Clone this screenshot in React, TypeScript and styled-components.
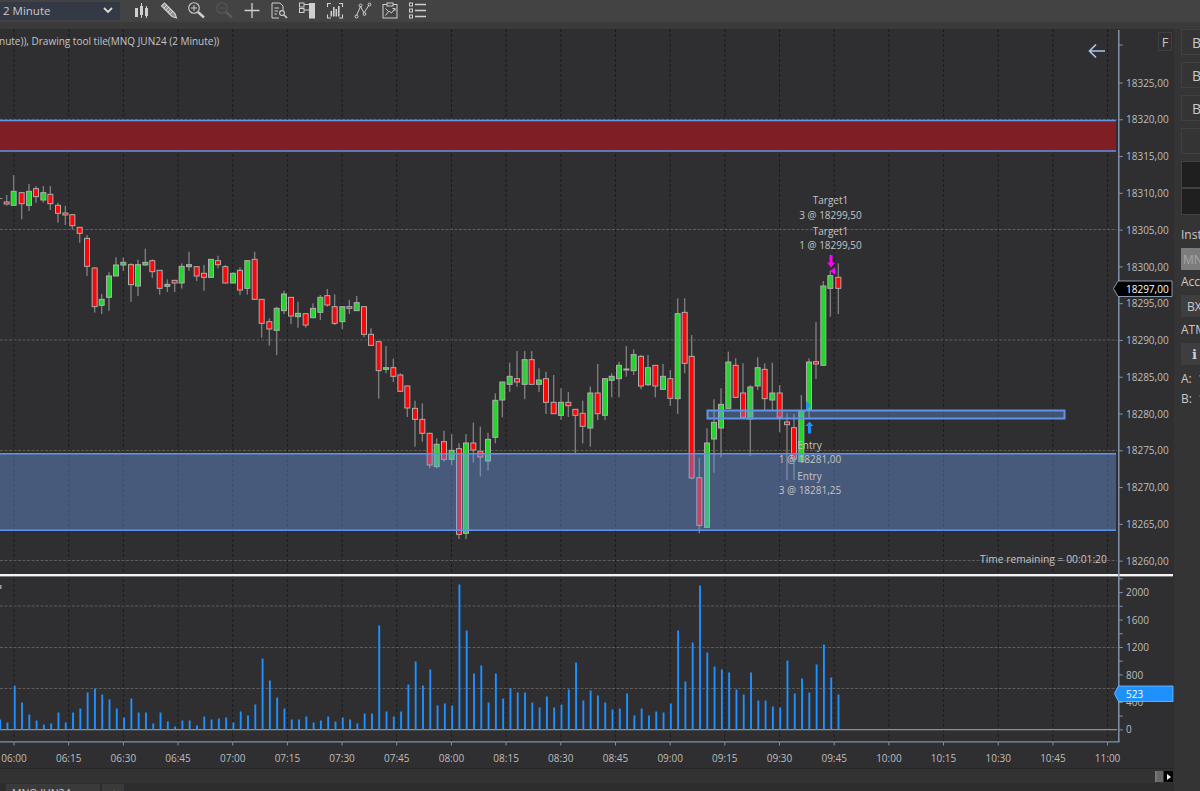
import { FC } from "react";
import styled, { createGlobalStyle } from "styled-components";

type Candle = [number, number, number, number, number, "r" | "g"];
type Group = { ox: number; oy: number; rows: Candle[] };

const RED = "#ff0606";
const GREEN = "#24d62c";
const BLUE = "#1e90ff";
const ZONE_LINE = "#6193ea";

// candle coordinates as read off the chart at 3x, grouped by the crop they came from
const candleGroups: Group[] = [
  {
    ox: 0,
    oy: 170,
    rows: [
      [20, 75, 107, 96, 102, "r"], [41, 15, 107, 64, 106, "g"], [65, 68, 148, 68, 101, "r"],
      [87, 42, 123, 64, 106, "g"], [108, 48, 98, 56, 80, "r"], [130, 48, 98, 68, 90, "g"],
      [151, 48, 120, 73, 101, "r"], [174, 98, 158, 106, 130, "r"], [196, 108, 165, 129, 135, "r"],
      [217, 133, 178, 134, 167, "r"], [239, 172, 218, 172, 190, "r"], [261, 195, 318, 205, 289, "r"],
      [284, 292, 428, 294, 410, "r"], [305, 372, 432, 388, 406, "g"], [327, 307, 422, 318, 382, "g"],
      [348, 262, 318, 285, 318, "g"], [370, 262, 303, 277, 285, "g"], [393, 280, 395, 284, 344, "r"],
      [414, 269, 378, 284, 348, "g"], [436, 236, 287, 277, 285, "g"], [457, 268, 324, 272, 305, "r"],
      [479, 300, 374, 301, 355, "r"], [502, 328, 366, 343, 349, "g"], [524, 330, 366, 331, 339, "r"],
      [545, 280, 356, 289, 339, "g"], [567, 245, 302, 284, 290, "g"], [590, 288, 333, 290, 318, "r"],
      [612, 285, 362, 310, 322, "r"], [633, 267, 323, 268, 322, "g"], [654, 257, 295, 272, 284, "r"],
      [676, 285, 340, 290, 339, "r"], [699, 307, 340, 310, 339, "g"], [720, 292, 375, 301, 360, "r"],
      [742, 270, 374, 272, 355, "g"], [764, 245, 388, 268, 388, "r"], [785, 388, 503, 388, 460, "r"],
      [808, 445, 527, 455, 477, "r"], [830, 410, 555, 415, 481, "g"],
    ],
  },
  {
    ox: 260,
    oy: 280,
    rows: [
      [72, 32, 102, 42, 92, "g"], [93, 52, 132, 52, 108, "r"], [114, 65, 143, 100, 110, "g"],
      [137, 100, 143, 101, 135, "r"], [159, 70, 115, 85, 113, "g"], [181, 45, 120, 52, 97, "g"],
      [202, 27, 80, 47, 75, "r"], [224, 43, 135, 80, 130, "r"], [247, 80, 148, 80, 125, "g"],
      [268, 60, 102, 80, 85, "r"], [290, 48, 93, 68, 92, "g"], [312, 80, 172, 80, 163, "r"],
      [333, 145, 197, 163, 196, "r"], [356, 185, 356, 185, 272, "r"], [378, 198, 280, 263, 268, "g"],
      [400, 236, 306, 263, 289, "r"], [421, 280, 335, 285, 334, "r"], [442, 317, 411, 318, 384, "r"],
      [465, 362, 500, 385, 418, "r"], [487, 370, 485, 418, 460, "r"], [509, 458, 565, 460, 555, "r"],
      [530, 475, 565, 493, 560, "g"], [552, 452, 545, 485, 538, "r"], [575, 462, 556, 511, 538, "g"],
      [597, 490, 777, 506, 763, "r"], [618, 462, 777, 489, 760, "g"], [640, 428, 548, 489, 510, "r"],
      [661, 440, 590, 515, 531, "r"], [684, 458, 572, 478, 543, "g"], [706, 340, 490, 361, 472, "g"],
      [727, 306, 412, 306, 360, "g"], [749, 248, 335, 289, 313, "g"],
    ],
  },
  {
    ox: 490,
    oy: 290,
    rows: [
      [81, 183, 290, 266, 276, "r"], [104, 183, 327, 209, 283, "g"], [125, 183, 283, 209, 283, "r"],
      [147, 235, 306, 270, 283, "g"], [168, 245, 372, 266, 337, "r"], [191, 255, 372, 337, 371, "r"],
      [213, 295, 390, 337, 376, "g"], [235, 306, 381, 337, 347, "r"], [256, 357, 490, 358, 376, "r"],
      [278, 332, 460, 370, 409, "r"], [301, 290, 470, 309, 414, "g"], [323, 222, 390, 309, 371, "r"],
      [345, 265, 390, 266, 376, "g"], [365, 250, 322, 259, 271, "g"], [387, 215, 322, 226, 266, "g"],
      [409, 168, 260, 237, 239, "g"], [431, 178, 255, 194, 242, "g"], [453, 195, 298, 199, 288, "r"],
      [474, 195, 288, 233, 284, "g"], [496, 225, 322, 226, 288, "r"], [519, 222, 300, 259, 298, "g"],
      [541, 240, 348, 266, 325, "r"], [563, 25, 372, 71, 326, "g"], [584, 25, 250, 67, 220, "r"],
      [605, 135, 568, 199, 564, "r"], [628, 503, 730, 563, 706, "r"], [651, 415, 712, 459, 712, "g"],
      [672, 328, 548, 397, 447, "g"],
    ],
  },
  {
    ox: 670,
    oy: 340,
    rows: [
      [153, 145, 352, 193, 264, "g"], [175, 35, 205, 66, 205, "g"], [197, 55, 175, 76, 172, "r"],
      [219, 70, 235, 159, 232, "r"], [241, 135, 348, 141, 237, "g"], [263, 52, 150, 83, 138, "g"],
      [284, 70, 210, 88, 176, "r"], [307, 68, 210, 159, 180, "g"], [329, 135, 277, 159, 232, "r"],
      [351, 220, 420, 246, 254, "r"], [372, 222, 420, 263, 357, "r"], [394, 165, 365, 213, 365, "g"],
      [417, 55, 235, 66, 208, "g"],
    ],
  },
  {
    ox: 670,
    oy: 180,
    rows: [
      [438, 427, 597, 545, 552, "r"], [460, 303, 556, 318, 556, "g"],
      [481, 272, 410, 287, 325, "g"], [505, 250, 402, 292, 325, "r"],
    ],
  },
];

const volumes = [
  10, 7, 44, 27, 15, 9, 5, 6, 17, 7, 17, 21, 37, 41, 35, 30, 21, 12, 31, 17, 17, 6, 17, 8, 3, 9, 9, 4, 13, 10,
  11, 12, 7, 18, 14, 25, 71, 49, 32, 21, 10, 10, 13, 7, 9, 13, 8, 12, 10, 6, 16, 16, 104, 18, 13, 18, 45, 68,
  44, 60, 24, 26, 24, 145, 99, 56, 64, 27, 56, 31, 41, 37, 37, 27, 22, 33, 22, 25, 40, 67, 29, 39, 34, 27, 20,
  21, 36, 14, 21, 14, 18, 17, 26, 99, 48, 87, 144, 77, 63, 60, 57, 40, 35, 57, 29, 29, 23, 22, 69, 36, 51, 37,
  65, 85, 52, 35,
];

const times = [
  "06:00", "06:15", "06:30", "06:45", "07:00", "07:15", "07:30", "07:45", "08:00", "08:15", "08:30",
  "08:45", "09:00", "09:15", "09:30", "09:45", "10:00", "10:15", "10:30", "10:45", "11:00",
];

const prices = [
  "18325,00", "18320,00", "18315,00", "18310,00", "18305,00", "18300,00", "18295,00",
  "18290,00", "18285,00", "18280,00", "18275,00", "18270,00", "18265,00", "18260,00",
];

const timeX = (i: number) => 14 + i * 54.68;
const priceY = (i: number) => 83 + i * 36.78;
const volY = (v: number) => 729.8 - (v / 200) * 13.72;

const GlobalStyle = createGlobalStyle`
  html, body {
    margin: 0;
    padding: 0;
    background: #343434;
  }
  * {
    box-sizing: border-box;
  }
`;

const Page = styled.div`
  width: 1200px;
  height: 791px;
  overflow: hidden;
  display: flex;
  flex-direction: column;
  background: #343434;
  font-family: "Open Sans", "Noto Sans", sans-serif;
  color: #c4c4c4;
`;

const Toolbar = styled.div`
  height: 22px;
  flex: none;
  display: flex;
  align-items: stretch;
  background: #434343;
`;

const IntervalSelect = styled.div`
  width: 120px;
  margin: 2px 0;
  padding: 0 7px 1px 3px;
  display: flex;
  align-items: center;
  justify-content: space-between;
  background: #343a45;
  font-size: 11.5px;
  color: #c8c8c8;
`;

const ToolRow = styled.div`
  margin-left: 11px;
  display: flex;
  gap: 7.7px;
`;

const ToolIcon = styled.svg<{ $dim?: boolean }>`
  width: 20px;
  height: 22px;
  flex: none;
  color: ${(p) => (p.$dim ? "#5a5a5a" : "#cfcfcf")};
`;

const Strip = styled.div`
  height: 7px;
  flex: none;
  background: #3a3a3a;
`;

const Body = styled.div`
  flex: 1;
  min-height: 0;
  display: flex;
`;

const ChartColumn = styled.div`
  width: 1174px;
  flex: none;
  display: flex;
  flex-direction: column;
`;

const ChartPane = styled.div`
  position: relative;
  height: 739px;
  flex: none;
  background: #2f2f31;
  svg {
    display: block;
  }
`;

const ChartTitle = styled.div`
  position: absolute;
  left: -1px;
  top: 5px;
  font-size: 10px;
  line-height: 14px;
  color: #c4c4c4;
  white-space: nowrap;
`;

const ScaleButton = styled.div`
  position: absolute;
  left: 1158px;
  top: 3px;
  width: 14px;
  height: 19px;
  display: flex;
  align-items: center;
  justify-content: center;
  border: 1px solid #3f3f3f;
  font-size: 13px;
  color: #c4c4c4;
`;

const AxisText = styled.text`
  font-family: "Open Sans", "Noto Sans", sans-serif;
  font-size: 10px;
  fill: #bdbdbd;
`;

const RemainingText = styled.text`
  font-family: "Open Sans", "Noto Sans", sans-serif;
  font-size: 10.3px;
  fill: #c4c4c4;
`;

const MarkerText = styled.text`
  font-family: "Open Sans", "Noto Sans", sans-serif;
  font-size: 10px;
  fill: #c4c4c4;
  text-anchor: middle;
`;

const BadgeText = styled.text`
  font-family: "Open Sans", "Noto Sans", sans-serif;
  font-size: 10px;
  fill: #ffffff;
`;

const ScrollRow = styled.div`
  height: 15px;
  flex: none;
  display: flex;
  justify-content: flex-end;
  align-items: stretch;
  padding: 2px 1px 1px 0;
  border-top: 1px solid #262626;
  background: #333333;
`;

const ScrollThumb = styled.div`
  width: 8px;
  background: #666666;
  border-left: 2px solid #777777;
`;

const ScrollEnd = styled.div`
  width: 9px;
  margin-left: 1px;
  background: #000000;
  display: flex;
  align-items: center;
  justify-content: center;
  &::after {
    content: "";
    border-left: 4px solid #ffffff;
    border-top: 3px solid transparent;
    border-bottom: 3px solid transparent;
  }
`;

const TabRow = styled.div`
  flex: 1;
  display: flex;
  gap: 2px;
  padding-left: 6px;
  background: #2d2d2d;
`;

const Tab = styled.div<{ $wide?: boolean }>`
  width: ${(p) => (p.$wide ? "94px" : "22px")};
  padding: 3px 0 0 ${(p) => (p.$wide ? "6px" : "9px")};
  margin-top: 1px;
  background: #3a3a3a;
  font-size: 10.5px;
  line-height: 13px;
  color: #d0d0d0;
  white-space: nowrap;
  overflow: hidden;
`;

const Side = styled.div`
  width: 19px;
  margin-left: 7px;
  flex: none;
  overflow: hidden;
  display: flex;
  flex-direction: column;
`;

const SideButton = styled.div`
  width: 60px;
  height: 26px;
  margin-bottom: 7px;
  padding-left: 10px;
  display: flex;
  align-items: center;
  border: 1px solid #414141;
  font-size: 14px;
  color: #c8c8c8;
`;

const DarkCell = styled.div`
  width: 60px;
  height: 27px;
  background: #1f1f1f;
  border: 1px solid #414141;
`;

const SideLabel = styled.div<{ $top: number }>`
  margin-top: ${(p) => p.$top}px;
  width: 60px;
  font-size: 12px;
  line-height: 16px;
  color: #c8c8c8;
  white-space: nowrap;
`;

const SideField = styled.div<{ $muted?: boolean }>`
  width: 60px;
  height: 22px;
  margin-top: 5px;
  padding-left: ${(p) => (p.$muted ? "2px" : "6px")};
  display: flex;
  align-items: center;
  background: ${(p) => (p.$muted ? "#7c7c7c" : "#3e3e41")};
  font-size: 12px;
  color: ${(p) => (p.$muted ? "#a6a6a6" : "#c8c8c8")};
`;

const InfoGlyph = styled.span`
  padding-left: 5px;
  font-family: "DejaVu Serif", serif;
  font-weight: 700;
  font-size: 13px;
  color: #d0d0d0;
`;

const Chevron: FC = () => (
  <svg width="10" height="7" viewBox="0 0 10 7">
    <path d="M1 1 L5 5 L9 1" fill="none" stroke="#d8d8d8" strokeWidth="1.8" />
  </svg>
);

const ToolIcons: FC = () => (
  <ToolRow>
    {/* candles */}
    <ToolIcon viewBox="0 0 20 22">
      <g fill="currentColor">
        <rect x="4" y="8" width="3" height="9" />
        <rect x="9" y="6" width="3" height="9" />
        <rect x="10" y="3" width="1" height="15" />
        <rect x="14" y="8" width="3" height="8" />
        <rect x="15" y="6" width="1" height="12" />
      </g>
    </ToolIcon>
    {/* pencil */}
    <ToolIcon viewBox="0 0 20 22">
      <g fill="none" stroke="currentColor">
        <path d="M2.5 6 L5.5 3 L16 13.5 L17.5 18 L13 16.5 Z" fill="#8e8e8e" strokeWidth="1.1" />
        <path d="M5 8 L8 5 M7 10 L10 7 M9 12 L12 9 M11 14 L14 11" strokeWidth="0.8" stroke="#e2e2e2" />
      </g>
    </ToolIcon>
    {/* zoom in */}
    <ToolIcon viewBox="0 0 20 22">
      <g fill="none" stroke="currentColor">
        <circle cx="8" cy="8" r="5.3" strokeWidth="1.1" />
        <path d="M5 8 H11 M8 5 V11" strokeWidth="1" />
        <path d="M12 12 L18 17.5" strokeWidth="2.4" />
      </g>
    </ToolIcon>
    {/* zoom out */}
    <ToolIcon $dim viewBox="0 0 20 22">
      <g fill="none" stroke="currentColor">
        <circle cx="8" cy="8" r="5.3" strokeWidth="1.1" />
        <path d="M5 8 H11" strokeWidth="1" />
        <path d="M12 12 L18 17.5" strokeWidth="2.4" />
      </g>
    </ToolIcon>
    {/* crosshair */}
    <ToolIcon viewBox="0 0 20 22">
      <path d="M2.5 10.5 H17.5 M10 3 V18" fill="none" stroke="currentColor" strokeWidth="1.3" />
    </ToolIcon>
    {/* document with magnifier */}
    <ToolIcon viewBox="0 0 20 22">
      <g fill="none" stroke="currentColor">
        <path d="M14 10 V6 L11 3 H3 V18 H10" strokeWidth="1" />
        <path d="M5.5 8 H10 M5.5 11 H9 M5.5 14 H8" strokeWidth="1" />
        <circle cx="13" cy="13" r="2.4" strokeWidth="1.1" />
        <path d="M15 15 L18 18" strokeWidth="1.6" />
      </g>
    </ToolIcon>
    {/* panel layout */}
    <ToolIcon viewBox="0 0 20 22">
      <g fill="none" stroke="currentColor">
        <rect x="2.5" y="3" width="4.5" height="4" strokeWidth="1" />
        <rect x="2.5" y="8.5" width="4.5" height="4" strokeWidth="1" />
        <path d="M7 4.5 H12 M7 10 H12" strokeWidth="1" />
      </g>
      <rect x="12" y="3" width="6" height="15.5" fill="currentColor" />
    </ToolIcon>
    {/* framed bars */}
    <ToolIcon viewBox="0 0 20 22">
      <g fill="none" stroke="currentColor" strokeWidth="1.1">
        <path d="M6 3.5 H2.5 V7 M14 3.5 H17.5 V7 M2.5 14.5 V18 H6 M17.5 14.5 V18 H14" />
      </g>
      <g fill="currentColor">
        <rect x="5.5" y="11" width="1.6" height="5.5" />
        <rect x="8" y="7" width="1.6" height="9.5" />
        <rect x="10.5" y="9" width="1.6" height="7.5" />
        <rect x="13" y="6" width="1.6" height="10.5" />
      </g>
    </ToolIcon>
    {/* polyline */}
    <ToolIcon viewBox="0 0 20 22">
      <g fill="none" stroke="currentColor" strokeWidth="1">
        <path d="M3.5 15.5 L7.5 6.5 L11 13 L16 5" />
        <circle cx="3.5" cy="16.5" r="1.5" />
        <circle cx="7.5" cy="5.5" r="1.4" />
        <circle cx="11.5" cy="14" r="1.4" />
        <circle cx="16.5" cy="4.5" r="1.4" />
      </g>
    </ToolIcon>
    {/* clipboard chart */}
    <ToolIcon viewBox="0 0 20 22">
      <g fill="none" stroke="currentColor" strokeWidth="1">
        <rect x="3" y="4.5" width="14" height="13.5" />
        <rect x="7" y="3" width="6" height="3" fill="#434343" />
        <path d="M5.5 15.5 L9 11 L11.5 13 L15 8.5 M12.5 8.5 H15 V11 M5.5 8.5 L8 11" />
      </g>
    </ToolIcon>
    {/* list */}
    <ToolIcon viewBox="0 0 20 22">
      <g fill="none" stroke="currentColor" strokeWidth="1">
        <rect x="1.5" y="3" width="3" height="3" />
        <rect x="1.5" y="9" width="3" height="3" />
        <rect x="1.5" y="15" width="3" height="3" />
      </g>
      <path d="M7 4.5 H18 M7 10.5 H18 M7 16.5 H18" stroke="currentColor" strokeWidth="1.4" />
    </ToolIcon>
  </ToolRow>
);

const Candles: FC = () => (
  <g>
    {/* lone tick at the left edge */}
    <path d="M0 198.5 H2.5" stroke="#8a8a8a" strokeWidth="1" />
    {candleGroups.map((g) =>
      g.rows.map(([zx, wt, wb, bt, bb, kind]) => {
        const x = g.ox + zx / 3;
        const top = g.oy + Math.min(bt, bb) / 3;
        const h = Math.max(Math.abs(bb - bt) / 3, 1);
        return (
          <g key={`${g.ox}-${zx}`}>
            <line x1={x} x2={x} y1={g.oy + wt / 3} y2={g.oy + wb / 3} stroke="#7c7c7c" strokeWidth="1.4" />
            <rect
              x={x - 2.5}
              y={top}
              width={5}
              height={h}
              fill={kind === "r" ? RED : GREEN}
              stroke="#adadad"
              strokeWidth="1"
            />
          </g>
        );
      })
    )}
  </g>
);

const Chart: FC = () => (
  <svg width="1174" height="739" viewBox="0 29 1174 739">
    {/* time grid */}
    {times.map((t, i) => (
      <line key={t} x1={timeX(i)} x2={timeX(i)} y1={29} y2={741} stroke="#1c1c1c" strokeDasharray="3 2" />
    ))}

    {/* price grid */}
    {[119.5, 229.5, 340, 450.5, 560.5, 606, 647.5, 688.5].map((y) => (
      <line key={y} x1={0} x2={1117} y1={y} y2={y} stroke="#5c5c5c" strokeDasharray="3 1.5" />
    ))}

    <Candles />

    {/* supply zone */}
    <rect x={0} y={120.5} width={1116} height={30.5} fill="#7f1f23" />
    <path d="M0 120.5 H1116 M0 151 H1116" stroke={ZONE_LINE} strokeWidth="1.5" />

    {/* demand zone, candles show through it */}
    <rect x={0} y={453.7} width={1116} height={76.6} fill="rgba(107,155,237,0.4)" />
    <path d="M0 453.7 H1116 M0 530.3 H1116" stroke={ZONE_LINE} strokeWidth="1.5" />
    <rect x={707.5} y={410.5} width={357} height={8} fill="rgba(107,155,237,0.35)" stroke={ZONE_LINE} strokeWidth="2" />

    {/* fills */}
    <path d="M829.5 255 H832.5 V262.5 H835 L831 267.5 L827 262.5 H829.5 Z" fill="#ff00ff" />
    <path d="M835 267 V275 L830.5 271 Z" fill="#ff00ff" />
    <path d="M808 433.5 H811 V426 H813.5 L809.5 421.5 L805.5 426 H808 Z" fill={BLUE} />
    <path d="M806 401 V410 L811 405.5 Z" fill={BLUE} />

    <MarkerText x={830.5} y={204}>Target1</MarkerText>
    <MarkerText x={830.5} y={219}>3 @ 18299,50</MarkerText>
    <MarkerText x={830.5} y={235}>Target1</MarkerText>
    <MarkerText x={830.5} y={249}>1 @ 18299,50</MarkerText>
    <MarkerText x={809.5} y={449}>Entry</MarkerText>
    <MarkerText x={810} y={463}>1 @ 18281,00</MarkerText>
    <MarkerText x={809.5} y={480}>Entry</MarkerText>
    <MarkerText x={810} y={494}>3 @ 18281,25</MarkerText>
    <RemainingText x={980} y={563}>Time remaining = 00:01:20</RemainingText>

    {/* back arrow */}
    <path d="M1105 51 H1089.5 M1096 44.5 L1089.5 51 L1096 57.5" fill="none" stroke="#a9c5e8" strokeWidth="1.7" />

    {/* pane divider */}
    <rect x={0} y={574} width={1173} height={2.4} fill="#f4f4f4" />
    <rect x={0} y={585} width={1.5} height={4} fill="#9a9a9a" />

    {/* volume */}
    <line x1={0} x2={1117} y1={729.6} y2={729.6} stroke="#8e8e8e" strokeWidth="1.2" />
    {volumes.map((v, i) => (
      <rect key={i} x={-0.8 + i * 7.29} y={729.5 - v} width={1.9} height={v} fill={BLUE} />
    ))}

    {/* price scale */}
    <line x1={1118.8} x2={1118.8} y1={30} y2={742} stroke="#7f93ad" strokeWidth="1.5" />
    <line x1={1118.8} x2={1122.8} y1={45} y2={45} stroke="#7f93ad" />
    {prices.map((p, i) => (
      <g key={p}>
        <line x1={1118.8} x2={1122.8} y1={priceY(i)} y2={priceY(i)} stroke="#7f93ad" />
        <AxisText x={1126} y={priceY(i) + 3.6}>{p}</AxisText>
      </g>
    ))}

    {/* volume scale */}
    {[2200, 2000, 1800, 1600, 1400, 1200, 1000, 800, 600, 400, 200, 0].map((v) => (
      <g key={v}>
        <line x1={1118.8} x2={1122.8} y1={volY(v)} y2={volY(v)} stroke="#7f93ad" />
        {v % 400 === 0 && v <= 2000 && (
          <AxisText x={1126} y={volY(v) + 3.6}>{v}</AxisText>
        )}
      </g>
    ))}

    {/* time scale */}
    <line x1={0} x2={1119.5} y1={741.8} y2={741.8} stroke="#7f93ad" strokeWidth="1.3" />
    {times.map((t, i) => (
      <g key={t}>
        <line x1={timeX(i)} x2={timeX(i)} y1={742} y2={745.5} stroke="#7f93ad" />
        <AxisText x={timeX(i)} y={762} textAnchor="middle">{t}</AxisText>
      </g>
    ))}

    {/* last price */}
    <path d="M1113.5 288.5 L1118 281 H1172 V296.5 H1118 Z" fill="#000000" stroke="#a8bdd6" strokeWidth="0.8" />
    <BadgeText x={1126} y={292.5}>18297,00</BadgeText>

    {/* last volume */}
    <path d="M1114.3 693.5 L1118.5 686 H1173 V701.5 H1118.5 Z" fill={BLUE} stroke="#7fbfff" strokeWidth="0.8" />
    <BadgeText x={1126} y={698}>523</BadgeText>
  </svg>
);

const App: FC = () => (
  <Page>
    <GlobalStyle />
    <Toolbar>
      <IntervalSelect>
        2 Minute
        <Chevron />
      </IntervalSelect>
      <ToolIcons />
    </Toolbar>
    <Strip />
    <Body>
      <ChartColumn>
        <ChartPane>
          <Chart />
          <ChartTitle>nute)), Drawing tool tile(MNQ JUN24 (2 Minute))</ChartTitle>
          <ScaleButton>F</ScaleButton>
        </ChartPane>
        <ScrollRow>
          <ScrollThumb />
          <ScrollEnd />
        </ScrollRow>
        <TabRow>
          <Tab $wide>MNQ JUN24</Tab>
          <Tab>+</Tab>
        </TabRow>
      </ChartColumn>
      <Side>
        <SideButton>B</SideButton>
        <SideButton>B</SideButton>
        <SideButton>B</SideButton>
        <SideButton />
        <DarkCell />
        <DarkCell />
        <SideLabel $top={12}>Instrument</SideLabel>
        <SideField $muted>MNQ</SideField>
        <SideLabel $top={4}>Account</SideLabel>
        <SideField>BX</SideField>
        <SideLabel $top={5}>ATM</SideLabel>
        <SideField><InfoGlyph>i</InfoGlyph></SideField>
        <SideLabel $top={6}>A:&nbsp;&nbsp;1</SideLabel>
        <SideLabel $top={4}>B:&nbsp;&nbsp;1</SideLabel>
      </Side>
    </Body>
  </Page>
);

export default App;
